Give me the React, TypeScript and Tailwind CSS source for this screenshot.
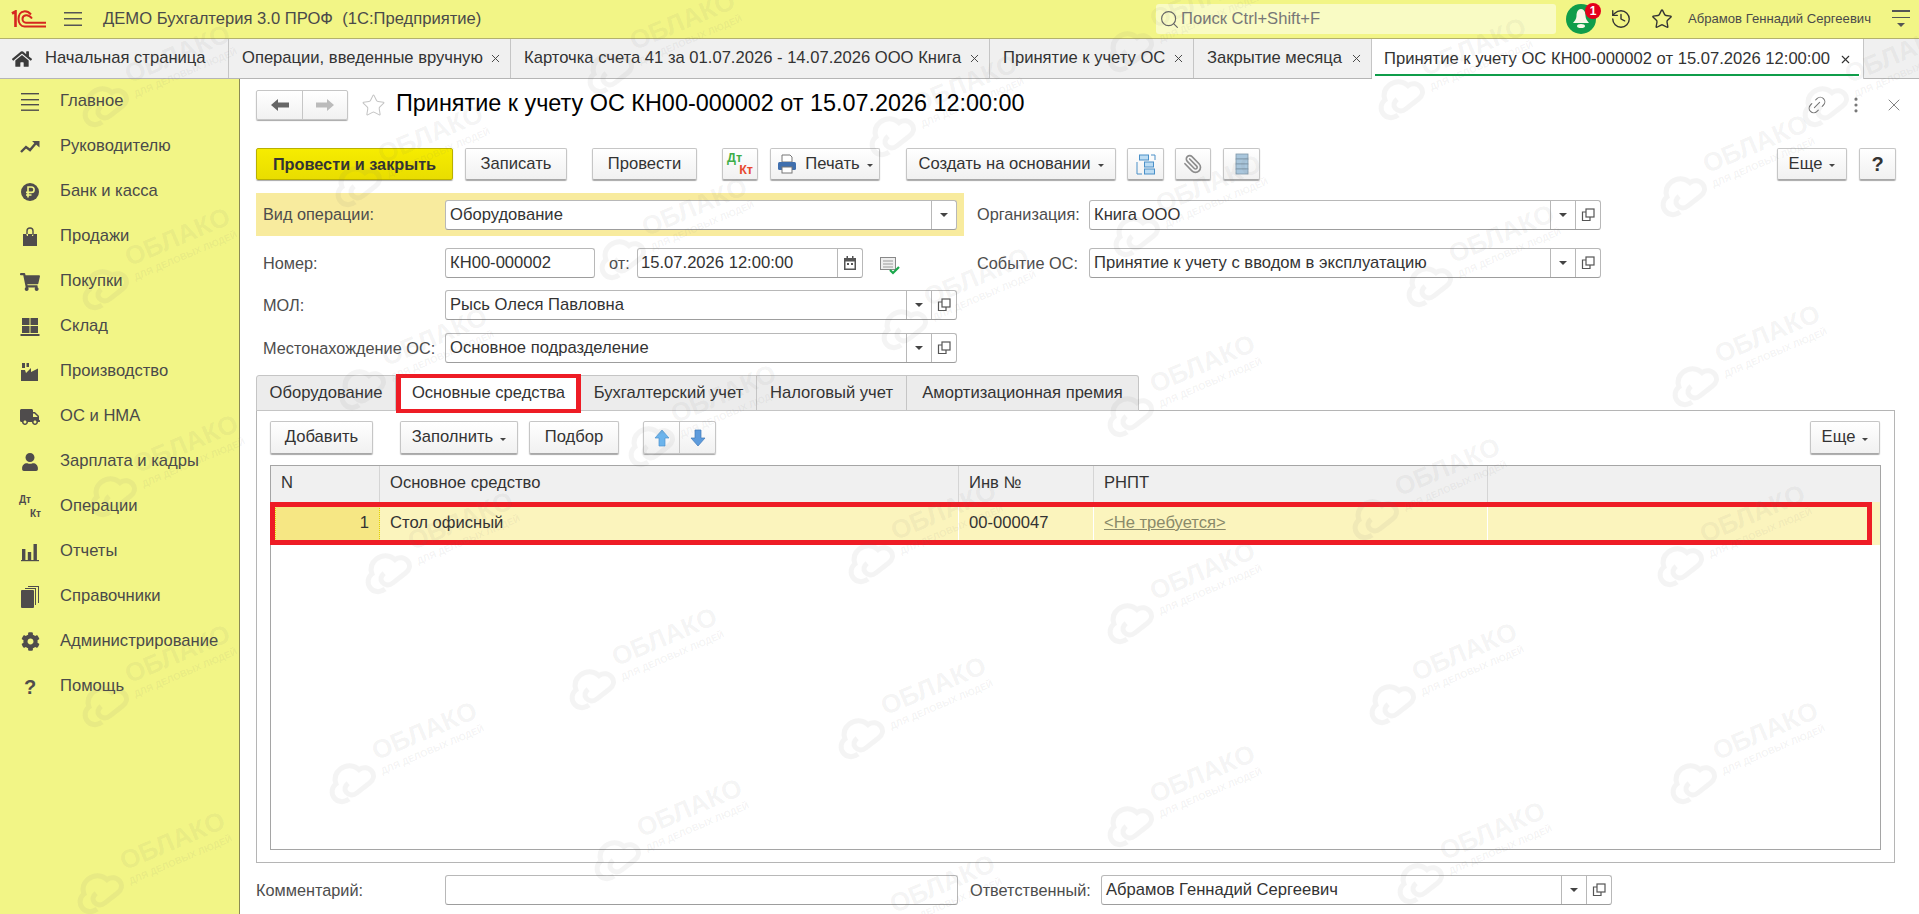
import type { ReactNode } from 'react';
import { History, Link2, EllipsisVertical, Paperclip, Star, X, Search } from 'lucide-react';
import { FaCog, FaHome, FaShoppingCart, FaTruck, FaUser } from 'react-icons/fa';

const tabs = [
  { title: 'Операции, введенные вручную', w: 'w-[282px]' },
  { title: 'Карточка счета 41 за 01.07.2026 - 14.07.2026 ООО Книга', w: 'w-[479px]' },
  { title: 'Принятие к учету ОС', w: 'w-[204px]' },
  { title: 'Закрытие месяца', w: 'w-[178px]' },
];

function MenuGlyph() {
  return (
    <svg width="20" height="20" viewBox="0 0 20 20" fill="#4f4c4c">
      <rect x="1" y="1" width="18" height="1.4" />
      <rect x="1" y="7" width="18" height="1.4" />
      <rect x="1" y="12" width="18" height="1.4" />
      <rect x="1" y="17.5" width="18" height="1.4" />
    </svg>
  );
}

function TrendGlyph() {
  return (
    <svg width="20" height="20" viewBox="0 0 20 20" fill="none">
      <path d="M1 15l5-5 4 3 6-7" stroke="#4f4c4c" strokeWidth="2.4" />
      <path d="M12 4h7.5v6.5z" fill="#4f4c4c" />
    </svg>
  );
}

function RubleGlyph() {
  return (
    <svg width="20" height="20" viewBox="0 0 20 20" fill="none">
      <circle cx="10" cy="10" r="9" fill="#4f4c4c" />
      <path d="M8 15.5V5h3.4a2.6 2.6 0 010 5.4H6M6 13h5.5" stroke="#f2f586" strokeWidth="1.6" />
    </svg>
  );
}

function BagGlyph() {
  return (
    <svg width="20" height="20" viewBox="0 0 20 20" fill="none">
      <path d="M3 7h3.2L7 9h1V7h4v2h1l.8-2H17v12H3z" fill="#4f4c4c" />
      <path d="M7 7V4a3 3 0 016 0v4" stroke="#4f4c4c" strokeWidth="1.4" />
    </svg>
  );
}

function StockGlyph() {
  return (
    <svg width="20" height="20" viewBox="0 0 20 20" fill="#4f4c4c">
      <rect x="2" y="1" width="7.5" height="7" />
      <rect x="10.5" y="1" width="7.5" height="7" />
      <rect x="2" y="9" width="7.5" height="7" />
      <rect x="10.5" y="9" width="7.5" height="7" />
      <rect x="0.5" y="17" width="19" height="2" />
    </svg>
  );
}

function FactoryGlyph() {
  return (
    <svg width="20" height="20" viewBox="0 0 20 20" fill="#4f4c4c">
      <path d="M2 1h3v5H2zM6.500 1h2.500v4H6.500z" />
      <path d="M1 19V8l4 0 1 3 5-5v4l7-3.500V19z" />
    </svg>
  );
}

function BarsGlyph() {
  return (
    <svg width="20" height="20" viewBox="0 0 20 20" fill="#4f4c4c">
      <rect x="2" y="7" width="3.4" height="11" />
      <rect x="7.800" y="10" width="3.4" height="8" />
      <rect x="13.500" y="2" width="3.4" height="16" />
      <rect x="1" y="18" width="18" height="1.200" />
    </svg>
  );
}

function BooksGlyph() {
  return (
    <svg width="20" height="24" viewBox="0 0 20 24" fill="#4f4c4c">
      <rect x="1" y="5" width="13" height="18" rx="1" />
      <path d="M5 3h11v17h-1V4H5zM8 1h11v17h-1V2H8z" />
    </svg>
  );
}

function DtKt({ small }: { small?: boolean }) {
  if (small) {
    return (
      <span className="relative block h-[24px] w-[22px] text-[10px] leading-none font-bold text-[#4f4c4c]">
        <span className="absolute left-0 top-0">Дт</span>
        <span className="absolute right-0 bottom-0">Кт</span>
      </span>
    );
  }
  return (
    <span className="relative block h-[24px] w-[26px] text-[12.5px] leading-none font-bold">
      <span className="absolute left-0 top-0 text-[#3fae49]">Дт</span>
      <span className="absolute right-0 bottom-0 text-[#e8492e]">Кт</span>
    </span>
  );
}

const nav: { label: string; icon: ReactNode }[] = [
  { label: 'Главное', icon: <MenuGlyph /> },
  { label: 'Руководителю', icon: <TrendGlyph /> },
  { label: 'Банк и касса', icon: <RubleGlyph /> },
  { label: 'Продажи', icon: <BagGlyph /> },
  { label: 'Покупки', icon: <FaShoppingCart size={20} /> },
  { label: 'Склад', icon: <StockGlyph /> },
  { label: 'Производство', icon: <FactoryGlyph /> },
  { label: 'ОС и НМА', icon: <FaTruck size={20} /> },
  { label: 'Зарплата и кадры', icon: <FaUser size={18} /> },
  { label: 'Операции', icon: <DtKt small /> },
  { label: 'Отчеты', icon: <BarsGlyph /> },
  { label: 'Справочники', icon: <BooksGlyph /> },
  { label: 'Администрирование', icon: <FaCog size={19} /> },
  { label: 'Помощь', icon: <span className="text-[20px] font-bold leading-none">?</span> },
];

const marks = [
  [180, 60], [180, 243], [188, 450], [180, 660], [175, 847],
  [433, 140], [437, 343], [463, 527], [427, 737],
  [685, 27], [697, 213], [726, 400], [667, 643], [692, 814],
  [967, 90], [979, 283], [946, 517], [936, 692], [945, 890],
  [1205, 5], [1211, 190], [1205, 370], [1205, 577], [1205, 780],
  [1476, 53], [1504, 240], [1450, 473], [1467, 658], [1495, 837],
  [1758, 150], [1770, 340], [1755, 520], [1768, 737], [1900, 60],
];

function Btn({ className, children }: { className: string; children: ReactNode }) {
  return (
    <div className={`flex items-center justify-center rounded-[2px] border border-[#c6c6c6] border-b-[#a8a8a8] bg-gradient-to-b from-white to-[#f1f1f1] shadow-[0_1px_1px_#a8a8a8] text-[#333] ${className}`}>
      {children}
    </div>
  );
}

function Caret() {
  return <span className="ml-[7px] mt-[3px] inline-block border-x-[3.5px] border-t-[3.5px] border-x-transparent border-t-[#444]" />;
}

function OpenGlyph() {
  return (
    <svg width="14" height="14" viewBox="0 0 14 14" fill="none" stroke="#555" strokeWidth="1.200">
      <rect x="5" y="1" width="8" height="8" />
      <path d="M5 4H1.500v8.500H9V9" />
    </svg>
  );
}

function Field({ className, text, open = true, drop = true }: { className: string; text: string; open?: boolean; drop?: boolean }) {
  return (
    <div className={`flex h-[30px] items-stretch rounded-[3px] border border-[#b8b8b8] border-b-[#9d9d9d] bg-white text-[#333] ${className}`}>
      <div className="flex-1 truncate pl-[4px] leading-[27px]">{text}</div>
      {drop && (
        <div className="flex w-[25px] items-center justify-center border-l border-[#b8b8b8]">
          <span className="inline-block border-x-[4px] border-t-[4px] border-x-transparent border-t-[#444]" />
        </div>
      )}
      {open && (
        <div className="flex w-[25px] items-center justify-center border-l border-[#b8b8b8]">
          <OpenGlyph />
        </div>
      )}
    </div>
  );
}

function Label({ className, children }: { className: string; children: ReactNode }) {
  return <div className={`shrink-0 text-[16.3px] text-[#4d4d4d] ${className}`}>{children}</div>;
}

export default function App() {
  return (
    <div className="relative flex h-[914px] w-[1919px] flex-col overflow-hidden bg-white font-['Liberation_Sans',Arial,sans-serif] text-[16.6px]">
      {/* верхняя панель */}
      <header className="flex h-[39px] shrink-0 items-center border-b border-[#b3b16e] bg-[#f2f586] text-[#4a4a4a]">
        <svg className="ml-[11px]" width="35" height="18" viewBox="0 0 35 18" fill="none" stroke="#d5261f">
          <path d="M1 3.500L4.500 1.500V17" strokeWidth="2.600" />
          <path d="M20 4.500C18 2.200 15.500 1.200 13 1.400 9.500 1.700 7.500 5 7.500 9s2.300 7.500 6 7.500H35" strokeWidth="2" />
          <path d="M21 8.500C19 6 17 5 15 5.300 12.800 5.600 11.500 7 11.500 9s1.500 3.700 3.500 3.700H35" strokeWidth="2" />
        </svg>
        <svg className="ml-[18px]" width="18" height="14" viewBox="0 0 18 14" fill="#555">
          <rect width="18" height="1.500" />
          <rect y="6" width="18" height="1.500" />
          <rect y="12.500" width="18" height="1.500" />
        </svg>
        <div className="ml-[21px] w-[1053px] shrink-0 whitespace-pre">ДЕМО Бухгалтерия 3.0 ПРОФ  (1С:Предприятие)</div>
        <div className="flex h-[30px] w-[400px] items-center rounded-[3px] bg-[#f9fbc4] pl-[3px] text-[#777]">
          <Search size={21} strokeWidth={1.3} className="text-[#666]" />
          <span className="ml-[1px]">Поиск Ctrl+Shift+F</span>
        </div>
        <div className="relative ml-[10px] h-[30px] w-[30px] shrink-0 rounded-full bg-[#0f9d4a]">
          <svg className="absolute left-[6px] top-[4px]" width="18" height="22" viewBox="0 0 18 22" fill="#f7f7e8">
            <path d="M9 1c3 0 4.500 3 4.500 7 0 3 2 5 3.500 7H1c1.500-2 3.500-4 3.500-7C4.500 4 6 1 9 1z" />
            <ellipse cx="9" cy="18" rx="4" ry="2" />
          </svg>
          <span className="absolute -right-[5px] -top-[1px] flex h-[16px] w-[16px] items-center justify-center rounded-full bg-[#e4001b] text-[12px] font-bold text-white">1</span>
        </div>
        <History size={22} strokeWidth={1.5} className="ml-[14px] shrink-0 text-[#333]" />
        <Star size={22} strokeWidth={1.5} className="ml-[19px] shrink-0 text-[#333]" />
        <div className="ml-[15px] w-[187px] shrink-0 text-[13.1px] whitespace-nowrap">Абрамов Геннадий Сергеевич</div>
        <div className="relative ml-[17px] flex h-[18px] w-[18px] shrink-0 flex-col gap-[5px]">
          <span className="h-[1.5px] bg-[#555]" />
          <span className="h-[1.5px] bg-[#555]" />
          <span className="mx-auto border-x-[4px] border-t-[4px] border-x-transparent border-t-[#555]" />
        </div>
      </header>

      {/* вкладки */}
      <nav className="flex h-[40px] shrink-0 border-b border-[#b5b5b5] bg-[#f0f0f0] text-[#333]">
        <div className="flex w-[229px] shrink-0 items-center border-r border-[#c5c5c5] pl-[12px]">
          <FaHome size={20} className="text-[#3b3b3b]" />
          <span className="ml-[13px]">Начальная страница</span>
        </div>
        {tabs.map((t) => (
          <div key={t.title} className={`flex shrink-0 items-center justify-between border-r border-[#c5c5c5] pl-[13px] pr-[8px] whitespace-nowrap ${t.w}`}>
            <span>{t.title}</span>
            <X size={13} strokeWidth={1.8} className="text-[#444]" />
          </div>
        ))}
        <div className="relative flex h-[40px] w-[492px] shrink-0 items-center justify-between border-r border-[#c5c5c5] bg-white pl-[12px] pr-[11px] whitespace-nowrap">
          <span>Принятие к учету ОС КН00-000002 от 15.07.2026 12:00:00</span>
          <X size={13} strokeWidth={2} className="text-[#333]" />
          <span className="absolute bottom-[3px] left-[3px] right-[4px] h-[2px] bg-[#0f9d4a]" />
        </div>
      </nav>

      <div className="flex min-h-0 flex-1">
        {/* разделы */}
        <aside className="flex w-[240px] shrink-0 flex-col border-r border-[#8b8a55] bg-[#f2f586] text-[#4a4a4a]">
          {nav.map((n) => (
            <div key={n.label} className="flex h-[45px] shrink-0 items-center">
              <div className="flex w-[60px] shrink-0 items-center justify-center text-[#4f4c4c]">{n.icon}</div>
              <span>{n.label}</span>
            </div>
          ))}
        </aside>

        {/* форма */}
        <main className="min-w-0 flex-1 pl-[16px] pt-[11px]">
          <div className="flex h-[30px] items-center">
            <div className="flex h-[30px] w-[92px] rounded-[2px] border border-[#c6c6c6] bg-gradient-to-b from-white to-[#f1f1f1] shadow-[0_1px_1px_#a8a8a8]">
              <div className="flex w-[46px] items-center justify-center border-r border-[#c6c6c6]">
                <svg width="18" height="12" viewBox="0 0 18 12" fill="#666"><path d="M0 6l7-6v3.500h11v5H7V12z" /></svg>
              </div>
              <div className="flex flex-1 items-center justify-center">
                <svg width="18" height="12" viewBox="0 0 18 12" fill="#bbb"><path d="M18 6l-7-6v3.500H0v5h11V12z" /></svg>
              </div>
            </div>
            <Star size={25} strokeWidth={1} className="ml-[13px] text-[#c4c4c4]" />
            <h1 className="mb-[2px] ml-[10px] text-[23.4px] whitespace-nowrap text-black">Принятие к учету ОС КН00-000002 от 15.07.2026 12:00:00</h1>
            <div className="ml-auto mr-[15px] flex items-center text-[#777]">
              <Link2 size={22} strokeWidth={1.2} className="-rotate-45" />
              <EllipsisVertical size={20} strokeWidth={1.8} className="ml-[18px]" />
              <X size={20} strokeWidth={1.1} className="ml-[18px]" />
            </div>
          </div>

          <div className="mt-[28px] flex h-[32px] items-stretch">
            <div className="flex w-[197px] items-center justify-center rounded-[2px] border border-[#b9b000] bg-gradient-to-b from-[#f6ec00] to-[#e9dd00] text-[16.3px] font-bold text-[#333] shadow-[0_1px_1px_#a8a8a8]">Провести и закрыть</div>
            <Btn className="ml-[12px] w-[102px]">Записать</Btn>
            <Btn className="ml-[25px] w-[105px]">Провести</Btn>
            <Btn className="ml-[25px] w-[36px]"><DtKt /></Btn>
            <Btn className="ml-[12px] w-[110px]">
              <svg width="20" height="20" viewBox="0 0 20 20">
                <path d="M5 1h8l2 2v5H5z" fill="#fff" stroke="#777" />
                <rect x="1" y="8" width="18" height="8" rx="1.500" fill="#3f6fae" />
                <rect x="5" y="13" width="10" height="6" fill="#fff" stroke="#777" />
              </svg>
              <span className="ml-[8px]">Печать</span>
              <Caret />
            </Btn>
            <Btn className="ml-[26px] w-[210px]">Создать на основании<Caret /></Btn>
            <Btn className="ml-[11px] w-[37px]">
              <svg width="20" height="21" viewBox="0 0 20 21" fill="none" stroke="#4a90c8" strokeWidth="1">
                <rect x="3.500" y="1" width="9" height="5" fill="#bcdcf3" />
                <rect x="8.500" y="8" width="9" height="5" fill="#bcdcf3" />
                <rect x="8.500" y="15" width="10" height="5" fill="#bcdcf3" />
                <path d="M1 8v12h5M15 1h4v5" />
              </svg>
            </Btn>
            <Btn className="ml-[11px] w-[36px]"><Paperclip size={20} strokeWidth={2} className="-scale-x-100 text-[#8d8d8d]" /></Btn>
            <Btn className="ml-[12px] w-[37px]">
              <svg width="14" height="22" viewBox="0 0 14 22" fill="#a9c6dc" stroke="#7f97a8" strokeWidth="0.800">
                <rect x="1" y="1" width="12" height="5" />
                <rect x="1" y="6" width="12" height="5" />
                <rect x="1" y="11" width="12" height="5" />
                <rect x="1" y="16" width="12" height="5" />
              </svg>
            </Btn>
            <Btn className="ml-auto w-[70px]">Еще<Caret /></Btn>
            <Btn className="ml-[12px] mr-[23px] w-[37px] text-[20px] font-bold">?</Btn>
          </div>

          <div className="mt-[13px] flex items-center">
            <div className="flex h-[43px] w-[708px] shrink-0 items-center bg-[#f8eb9e] pl-[7px]">
              <Label className="w-[182px]">Вид операции:</Label>
              <Field className="w-[512px]" text="Оборудование" open={false} />
            </div>
            <Label className="ml-[13px] w-[112px]">Организация:</Label>
            <Field className="w-[512px]" text="Книга ООО" />
          </div>

          <div className="mt-[12px] flex items-center">
            <Label className="ml-[7px] w-[182px]">Номер:</Label>
            <Field className="w-[150px]" text="КН00-000002" open={false} drop={false} />
            <Label className="ml-[14px] w-[28px]">от:</Label>
            <div className="flex h-[30px] w-[226px] rounded-[3px] border border-[#b8b8b8] border-b-[#9d9d9d] text-[#333]">
              <div className="flex-1 pl-[3px] leading-[27px]">15.07.2026 12:00:00</div>
              <div className="flex w-[25px] items-center justify-center border-l border-[#b8b8b8]">
                <svg width="12" height="14" viewBox="0 0 12 14" fill="#555">
                  <path d="M0 2h2.500V0h1.500v2h4V0h1.500v2H12v12H0zm1.500 3.500v7h9v-7z" />
                  <rect x="3" y="7" width="2" height="2" />
                  <rect x="7" y="7" width="2" height="2" />
                </svg>
              </div>
            </div>
            <svg className="ml-[17px] mt-[6px]" width="20" height="18" viewBox="0 0 20 18">
              <rect x="0.500" y="0.500" width="15" height="12" fill="#eee" stroke="#888" />
              <path d="M3 4h10M3 7h10M3 10h10" stroke="#999" />
              <path d="M10 13l3 3 6-6" stroke="#1aa84c" strokeWidth="2.200" fill="none" />
            </svg>
            <Label className="ml-[77px] w-[112px]">Событие ОС:</Label>
            <Field className="w-[512px]" text="Принятие к учету с вводом в эксплуатацию" />
          </div>

          <div className="mt-[12px] flex items-center">
            <Label className="ml-[7px] w-[182px]">МОЛ:</Label>
            <Field className="w-[512px]" text="Рысь Олеся Павловна" />
          </div>
          <div className="mt-[13px] flex items-center">
            <Label className="ml-[7px] w-[182px]">Местонахождение ОС:</Label>
            <Field className="w-[512px]" text="Основное подразделение" />
          </div>

          <div className="relative z-10 mt-[12px] flex h-[36px] items-stretch text-[#333]">
            <div className="flex w-[140px] items-center justify-center rounded-tl-[3px] border border-[#c5c5c5] bg-[#ececec]">Оборудование</div>
            <div className="relative flex w-[185px] items-center justify-center bg-white">
              Основные средства
              <span className="absolute -top-[1px] -bottom-[2px] inset-x-0 border-x-[5px] border-y-[4px] border-[#ee1c25]" />
            </div>
            <div className="flex w-[176px] items-center justify-center border-y border-r border-[#c5c5c5] bg-[#ececec]">Бухгалтерский учет</div>
            <div className="flex w-[150px] items-center justify-center border-y border-r border-[#c5c5c5] bg-[#ececec]">Налоговый учет</div>
            <div className="flex w-[232px] items-center justify-center rounded-tr-[3px] border-y border-r border-[#c5c5c5] bg-[#ececec]">Амортизационная премия</div>
          </div>

          <section className="-mt-[1px] h-[453px] w-[1639px] border border-[#b5b5b5] bg-white px-[13px] pt-[10px]">
            <div className="flex h-[33px] items-stretch">
              <Btn className="w-[103px]">Добавить</Btn>
              <Btn className="ml-[27px] w-[118px]">Заполнить<Caret /></Btn>
              <Btn className="ml-[11px] w-[90px]">Подбор</Btn>
              <div className="ml-[24px] flex w-[73px] rounded-[2px] border border-[#c6c6c6] bg-gradient-to-b from-white to-[#f1f1f1] shadow-[0_1px_1px_#a8a8a8]">
                <div className="flex flex-1 items-center justify-center border-r border-[#c6c6c6]">
                  <svg width="16" height="18" viewBox="0 0 16 18" fill="#6cb4ec" stroke="#4d94d0" strokeWidth="0.700"><path d="M8 1l7 8h-4v8H5V9H1z" /></svg>
                </div>
                <div className="flex flex-1 items-center justify-center">
                  <svg width="16" height="18" viewBox="0 0 16 18" fill="#5d9bdc" stroke="#4178b8" strokeWidth="0.700"><path d="M8 17l7-8h-4V1H5v8H1z" /></svg>
                </div>
              </div>
              <Btn className="ml-auto mr-[1px] w-[70px]">Еще<Caret /></Btn>
            </div>

            <div className="mt-[11px] h-[385px] w-[1611px] border border-[#a5a5a5] text-[#333]">
              <div className="flex h-[36px] bg-[#f0f0f0]">
                <div className="w-[109px] border-r border-[#d5d5d5] pl-[10px] leading-[34px]">N</div>
                <div className="w-[579px] border-r border-[#d5d5d5] pl-[10px] leading-[34px]">Основное средство</div>
                <div className="w-[135px] border-r border-[#d5d5d5] pl-[10px] leading-[34px]">Инв №</div>
                <div className="w-[394px] border-r border-[#d5d5d5] pl-[10px] leading-[34px]">РНПТ</div>
              </div>
              <div className="relative flex h-[43px] bg-[#fbf4bd]">
                <div className="mx-[4px] my-[4px] flex w-[105px] shrink-0 items-center justify-end border border-dotted border-[#e3d200] bg-[#f6e784] pr-[10px]">1</div>
                <div className="-ml-[4px] flex w-[579px] items-center border-r border-white pl-[10px]">Стол офисный</div>
                <div className="flex w-[135px] items-center border-r border-white pl-[10px]">00-000047</div>
                <div className="flex w-[394px] items-center border-r border-white pl-[10px] text-[#8a8a6a] underline">&lt;Не требуется&gt;</div>
                <span className="absolute -left-[1px] right-[8px] inset-y-0 border-x-[5px] border-y-[5px] border-[#ee1c25]" />
              </div>
            </div>
          </section>

          <div className="mt-[12px] flex items-center">
            <Label className="w-[189px]">Комментарий:</Label>
            <Field className="w-[513px]" text="" open={false} drop={false} />
            <Label className="ml-[12px] w-[131px]">Ответственный:</Label>
            <Field className="w-[511px]" text="Абрамов Геннадий Сергеевич" />
          </div>
        </main>
      </div>

      {/* водяные знаки */}
      <div className="pointer-events-none absolute inset-0 z-20">
        {marks.map(([x, y]) => (
          <div key={`${x}-${y}`} className="absolute h-0 w-0 rotate-[-23deg]" style={{ left: x, top: y }}>
            <div className="absolute -left-[60px] -top-[22px] w-[120px] text-center text-[rgba(110,110,110,0.08)]">
              <div className="text-[26px] leading-[30px] font-bold">ОБЛАКО</div>
              <div className="text-[9.500px] leading-[12px] font-bold whitespace-nowrap">ДЛЯ ДЕЛОВЫХ ЛЮДЕЙ</div>
            </div>
            <svg className="absolute -left-[114px] -top-[8px] -rotate-[15deg]" width="52" height="36" viewBox="0 0 52 36" fill="none" stroke="rgba(110,110,110,0.08)" strokeWidth="5">
              <path d="M14 32C7 32 3 27 3 22c0-6 5-10 10-10 2-6 7-9 13-9 7 0 13 5 14 12 5 0 9 4 9 9 0 5-4 8-9 8H24c-5 0-8-3-8-7s3-6 7-6" />
            </svg>
          </div>
        ))}
      </div>
    </div>
  );
}
